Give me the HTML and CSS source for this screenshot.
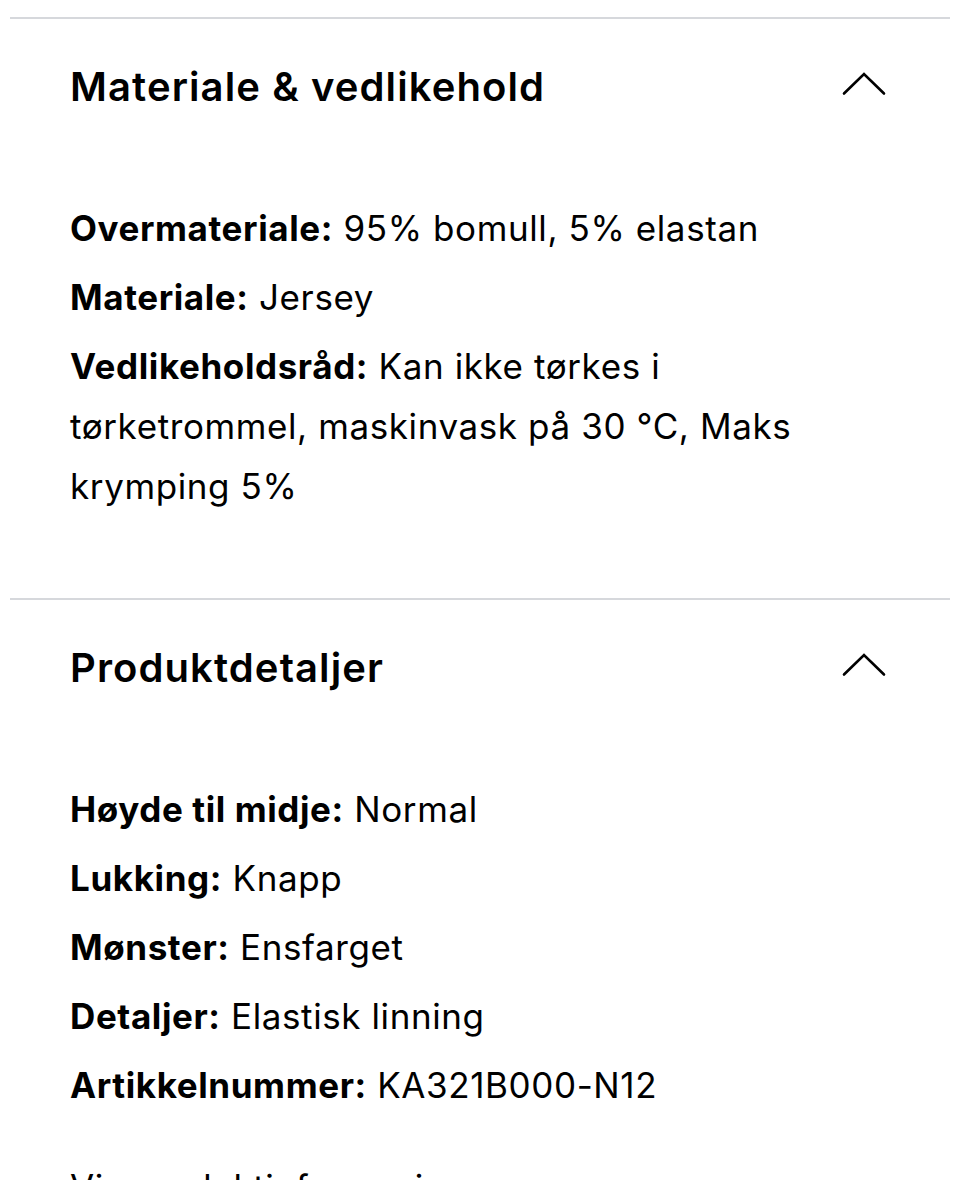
FILE: index.html
```html
<!DOCTYPE html>
<html lang="no">
<head>
<meta charset="utf-8">
<title>Produktinformasjon</title>
<link rel="stylesheet" href="styles.css">
</head>
<body>
<main class="page">
  <section class="acc">
    <div class="acc-head">
      <h2 class="acc-title">Materiale &amp; vedlikehold</h2>
      <svg class="chev" width="44" height="24" viewBox="0 0 44 24" aria-hidden="true"><polyline points="2,21.5 22,2 42,21.5" fill="none" stroke="#000" stroke-width="2.6" stroke-linecap="round" stroke-linejoin="miter"/></svg>
    </div>
    <div class="acc-body">
      <p class="row"><b>Overmateriale:</b> 95% bomull, 5% elastan</p>
      <p class="row"><b>Materiale:</b> Jersey</p>
      <p class="row"><b>Vedlikeholdsråd:</b> Kan ikke tørkes i tørketrommel, maskinvask på 30 °C, Maks krymping 5%</p>
    </div>
  </section>
  <section class="acc">
    <div class="acc-head">
      <h2 class="acc-title">Produktdetaljer</h2>
      <svg class="chev" width="44" height="24" viewBox="0 0 44 24" aria-hidden="true"><polyline points="2,21.5 22,2 42,21.5" fill="none" stroke="#000" stroke-width="2.6" stroke-linecap="round" stroke-linejoin="miter"/></svg>
    </div>
    <div class="acc-body">
      <p class="row"><b>Høyde til midje:</b> Normal</p>
      <p class="row"><b>Lukking:</b> Knapp</p>
      <p class="row"><b>Mønster:</b> Ensfarget</p>
      <p class="row"><b>Detaljer:</b> Elastisk linning</p>
      <p class="row"><b>Artikkelnummer:</b> KA321B000-N12</p>
      <p class="more">Vis produktinformasjon</p>
    </div>
  </section>
</main>
</body>
</html>
```

FILE: styles.css
```css
html, body {
  margin: 0;
  padding: 0;
  background: #fff;
}
body {
  font-family: Inter, "Liberation Sans", Arial, sans-serif;
  color: #000;
}
.page {
  padding: 17px 10px 0;
}
.acc {
  border-top: 2px solid #d6d8dc;
}
.acc-head {
  height: 136px;
  display: flex;
  align-items: center;
  justify-content: space-between;
  padding: 0 64px 0 60px;
}
.acc-title {
  margin: 0;
  font-size: 40px;
  font-weight: 600;
  line-height: 1;
  letter-spacing: 1.1px;
}
.chev {
  display: block;
  margin-top: -7px;
}
.acc-body {
  padding: 43px 90px 82px 60px;
}
.row {
  margin: 0 0 9px;
  font-size: 35px;
  line-height: 60px;
  font-weight: 400;
  letter-spacing: 0.6px;
}
.row b {
  font-weight: 700;
}
.row:last-of-type {
  margin-bottom: 0;
}
.more {
  margin: 42px 0 0;
  font-size: 35px;
  line-height: 60px;
  letter-spacing: 0.6px;
}
```
